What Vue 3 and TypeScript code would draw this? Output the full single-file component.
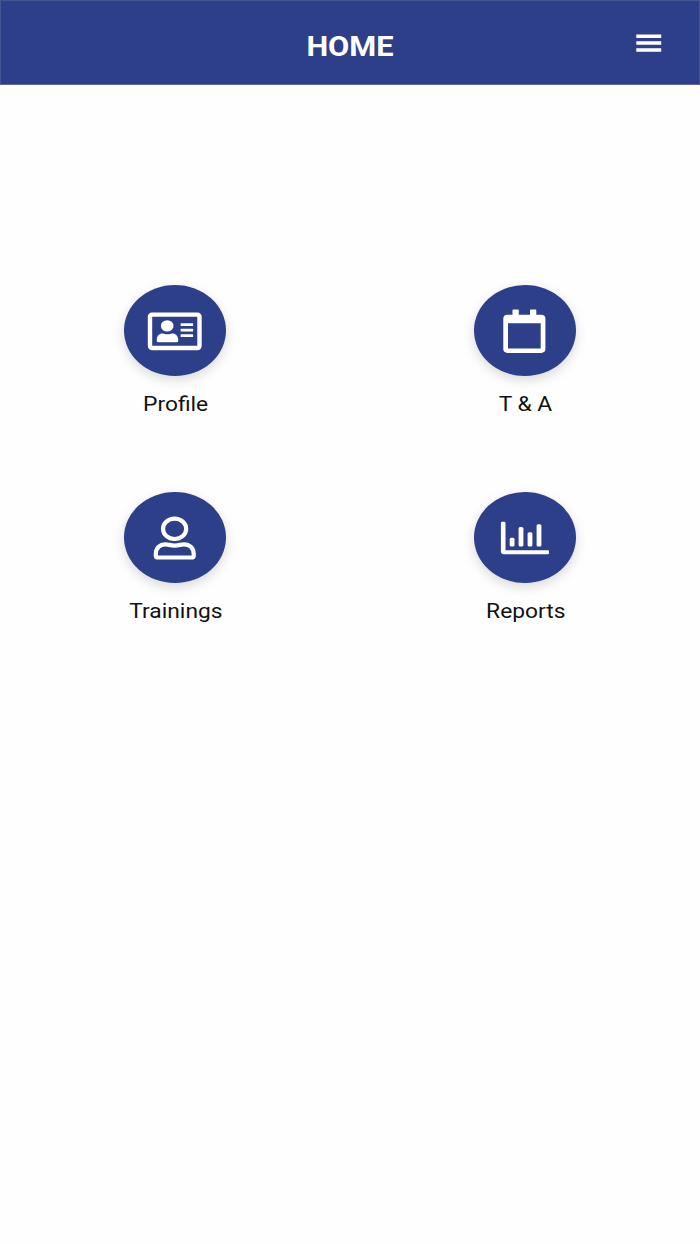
<script setup lang="ts">
type IconName = 'card' | 'calendar' | 'person' | 'chart'

interface MenuItem {
  icon: IconName
  label: string
}

const items: MenuItem[] = [
  { icon: 'card', label: 'Profile' },
  { icon: 'calendar', label: 'T & A' },
  { icon: 'person', label: 'Trainings' },
  { icon: 'chart', label: 'Reports' },
]
</script>

<template>
  <div class="screen">
    <header class="bar">
      <span class="side"></span>
      <h1 class="title">HOME</h1>
      <button class="side menu" type="button" aria-label="Menu">
        <svg width="26" height="18" viewBox="0 0 26 18" fill="#fff">
          <path d="M0.3 0.4h24.9v3.5H0.3zM0.3 7.2h24.9v3.5H0.3zM0.3 14.2h24.9v3.5H0.3z" />
        </svg>
      </button>
    </header>

    <main class="grid">
      <a v-for="item in items" :key="item.icon" class="item">
        <span class="disc">
          <svg v-if="item.icon === 'card'" viewBox="0 0 102 91" fill="#fff">
            <rect x="26" y="29.6" width="49.5" height="33.4" rx="2" fill="none" stroke="#fff" stroke-width="4.4" />
            <ellipse cx="43.2" cy="40.9" rx="6.3" ry="5.7" />
            <path d="M38.5 48.4c2 0 2.5.8 4.8.8s2.8-.8 4.8-.8c3.700 0 6.100 2.700 6.100 6.300v1.200q0 1.400-1.500 1.400H34.300q-1.500 0-1.500-1.400v-1.200c0-3.600 2.200-6.300 5.700-6.300z" />
            <rect x="56.600" y="38.200" width="12.500" height="2.700" rx=".5" />
            <rect x="56.600" y="43.700" width="12.500" height="2.700" rx=".5" />
            <rect x="56.600" y="49.200" width="12.500" height="2.700" rx=".5" />
          </svg>
          <svg v-else-if="item.icon === 'calendar'" viewBox="0 0 102 91" fill="#fff">
            <path
              fill-rule="evenodd"
              d="M39.300 24.500h4.700q.8 0 .8.800v4.400h11.200v-4.400q0-.8.8-.8h4.700q.8 0 .8.800v4.400h4.800q4.300 0 4.300 4v30.400q0 3.800-4.300 3.800H33.500q-4.200 0-4.200-3.800V33.700q0-4 4.200-4h5v-4.400q0-.8.8-.8zM34 38.200v25.200h32.700V38.200z"
            />
          </svg>
          <svg v-else-if="item.icon === 'person'" viewBox="0 0 102 91" fill="none" stroke="#fff" stroke-width="4.200">
            <ellipse cx="50.600" cy="36.800" rx="11.600" ry="10.200" />
            <path d="M41.500 52.300c3.500 0 4.600 1.300 9.200 1.300s5.700-1.300 9.200-1.300c6 0 9.800 4.200 9.800 9.500v1.900q0 1.800-2.200 1.800H34q-2.200 0-2.200-1.800v-1.900c0-5.300 3.700-9.500 9.700-9.500z" />
          </svg>
          <svg v-else viewBox="0 0 102 91" fill="#fff">
            <path d="M28 29.700h2.200q1.300 0 1.300 1.300v27.300h42.200q1.300 0 1.300 1.300v1.300q0 1.300-1.300 1.300H29.900q-3 0-3-2.700V31q0-1.300 1.100-1.300z" />
            <rect x="35.700" y="45.800" width="4.800" height="8.600" rx="1.500" />
            <rect x="44.600" y="34.900" width="4.800" height="19.500" rx="1.500" />
            <rect x="53.600" y="40.300" width="4.800" height="14.100" rx="1.500" />
            <rect x="62.600" y="32.300" width="4.800" height="22.100" rx="1.500" />
          </svg>
        </span>
        <span class="label">{{ item.label }}</span>
      </a>
    </main>
  </div>
</template>

<style>
body {
  background: #fff;
}
</style>

<style scoped>
.screen {
  width: 700px;
  height: 1244px;
  overflow: hidden;
  background: #fefefe;
  font-family: Roboto, "Liberation Sans", sans-serif;
}

.bar {
  box-sizing: border-box;
  display: flex;
  align-items: center;
  height: 85px;
  padding: 0 37px;
  border: 1px solid #475692;
  border-bottom-color: #5b689f;
  background: #2e3f8a;
}

.side {
  width: 27px;
  height: 18px;
}

.menu {
  display: flex;
  justify-content: flex-end;
  margin: 1px 0 0;
  padding: 0;
  border: 0;
  background: none;
}

.title {
  flex: 1;
  margin: 8px 0 0;
  color: #fff;
  font-size: 27px;
  font-weight: 700;
  line-height: 32px;
  text-align: center;
  transform: scaleX(1.14);
}

.grid {
  display: grid;
  grid-template-columns: 1fr 1fr;
  grid-auto-rows: 207px;
  padding-top: 200px;
}

.item {
  display: flex;
  flex-direction: column;
  align-items: center;
}

.disc {
  width: 102px;
  height: 91px;
  border-radius: 50%;
  background: #2e3f8a;
  box-shadow: 0 4px 12px rgba(0, 0, 0, 0.15);
}

.disc svg {
  display: block;
  width: 102px;
  height: 91px;
}

.label {
  margin: 16px 0 0 1px;
  color: #111;
  font-size: 20px;
  line-height: 24px;
  transform: scaleX(1.14);
}
</style>
